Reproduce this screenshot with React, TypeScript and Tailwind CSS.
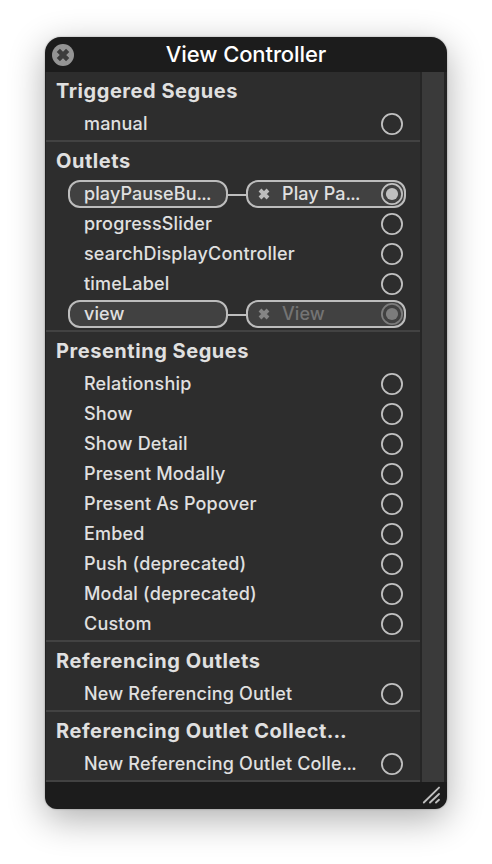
type Connection = { label: string; disabled?: boolean };
type Row = { name: string; connection?: Connection };
type Section = { title: string; rows: Row[] };

const sections: Section[] = [
  { title: "Triggered Segues", rows: [{ name: "manual" }] },
  {
    title: "Outlets",
    rows: [
      { name: "playPauseBu...", connection: { label: "Play Pa..." } },
      { name: "progressSlider" },
      { name: "searchDisplayController" },
      { name: "timeLabel" },
      { name: "view", connection: { label: "View", disabled: true } },
    ],
  },
  {
    title: "Presenting Segues",
    rows: [
      { name: "Relationship" },
      { name: "Show" },
      { name: "Show Detail" },
      { name: "Present Modally" },
      { name: "Present As Popover" },
      { name: "Embed" },
      { name: "Push (deprecated)" },
      { name: "Modal (deprecated)" },
      { name: "Custom" },
    ],
  },
  { title: "Referencing Outlets", rows: [{ name: "New Referencing Outlet" }] },
  { title: "Referencing Outlet Collect...", rows: [{ name: "New Referencing Outlet Colle..." }] },
];

/** Text on one line, with a tighter ellipsis when it is cut short. */
function Label({ text, dots = "tracking-[-0.8px]" }: { text: string; dots?: string }) {
  const cut = text.endsWith("...");
  return (
    <span className="whitespace-nowrap">
      {cut ? text.slice(0, -3) : text}
      {cut && <span className={dots}>...</span>}
    </span>
  );
}

function Cross({ className }: { className: string }) {
  return (
    <svg viewBox="0 0 12 12" className={className}>
      <path d="M2 2 10 10M10 2 2 10" stroke="currentColor" strokeWidth="3.9" fill="none" />
    </svg>
  );
}

function Well({ filled = false }: { filled?: boolean }) {
  return (
    <svg viewBox="0 0 22 22" className="size-[22px] shrink-0">
      <circle cx="11" cy="11" r="10.1" fill="none" stroke="currentColor" strokeWidth="1.8" />
      {filled && <circle cx="11" cy="11" r="6.1" fill="currentColor" />}
    </svg>
  );
}

function RowView({ row }: { row: Row }) {
  if (!row.connection) {
    return (
      <div className="flex h-[30px] items-center justify-between pr-[17px] pl-[38px]">
        <Label text={row.name} />
        <span className="flex text-[#c0c0c0]">
          <Well />
        </span>
      </div>
    );
  }
  const { label, disabled } = row.connection;
  return (
    <div className="flex h-[30px] items-center pl-[22px] tracking-[0.1px]">
      <div className="flex h-7 w-40 items-center rounded-[12px] border-2 border-[#bdbdbd] bg-[#414141] pl-3.5">
        <Label text={row.name} />
      </div>
      <div className="mt-[2px] h-[2px] w-[18px] bg-[#bdbdbd]" />
      <div
        className={`flex h-7 w-40 items-center rounded-[12px] border-2 border-[#bdbdbd] bg-[#414141] pr-px pl-2.5 ${disabled ? "text-[#747474]" : "text-[#e0e0e0]"}`}
      >
        <Cross className={disabled ? "size-3 text-[#858585]" : "size-3 text-[#bdbdbd]"} />
        <span className="ml-3 flex flex-1">
          <Label text={label} />
        </span>
        <span className={disabled ? "flex text-[#7c7c7c]" : "flex text-[#c0c0c0]"}>
          <Well filled />
        </span>
      </div>
    </div>
  );
}

export default function App() {
  return (
    <div className="h-[864px] w-[492px] overflow-hidden bg-white pt-[37px] pl-[45px] font-['Inter',sans-serif]">
      <div className="flex h-[772px] w-[402px] flex-col overflow-hidden rounded-t-[16px] rounded-b-[12px] bg-[#1c1c1c] shadow-[0_0_2px_rgba(0,0,0,0.35),0_10px_36px_rgba(0,0,0,0.32)]">
        <div className="flex h-[35px] items-center pl-[7px]">
          <div className="flex size-[22px] items-center justify-center rounded-full bg-[#949494] text-[#3c3c3c]">
            <Cross className="size-[14px]" />
          </div>
          <h1 className="flex-1 pr-[29px] text-center text-[22px] leading-[35px] font-medium tracking-[-0.1px] text-white">
            View Controller
          </h1>
        </div>
        <div className="flex h-[710px] border-l border-[#222222]">
          <div className="w-[374px] bg-[#2d2d2d] text-[18px] leading-[26px] font-medium tracking-[0.18px] text-[#e0e0e0]">
            {sections.map((section) => (
              <section key={section.title} className="border-b-2 border-[#424242] pb-px">
                <h2 className="h-[37px] pl-[10px] text-[20px] leading-[39px] font-bold tracking-[0.54px]">
                  <Label text={section.title} dots="tracking-[-0.1px]" />
                </h2>
                {section.rows.map((row) => (
                  <RowView key={row.name} row={row} />
                ))}
              </section>
            ))}
          </div>
          <div className="w-[2px] bg-[#262626]" />
          <div className="w-[22px] bg-[#3a3a3a]" />
          <div className="flex-1 bg-[#242424]" />
        </div>
        <div className="flex flex-1 justify-end pt-1 pr-[6px]">
          <svg viewBox="0 0 19 19" className="size-[19px]">
            <path
              d="M1.8 16.5 17 1.6M8 16.5 17 8M14 16.5 17 13.8"
              stroke="#bdbdbd"
              strokeWidth="1.9"
              strokeLinecap="round"
              fill="none"
            />
          </svg>
        </div>
      </div>
    </div>
  );
}
